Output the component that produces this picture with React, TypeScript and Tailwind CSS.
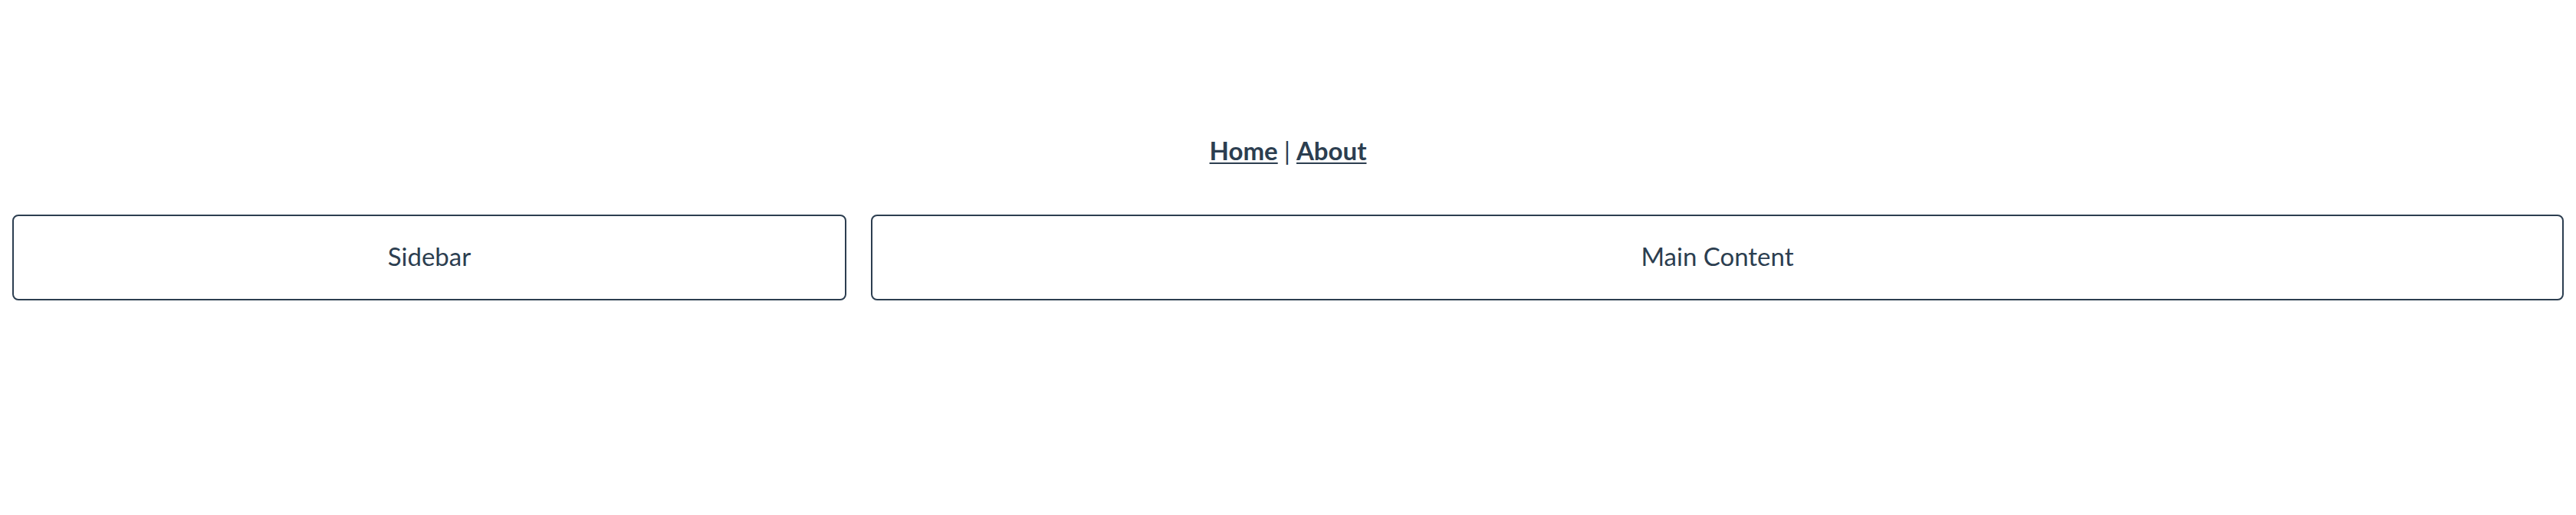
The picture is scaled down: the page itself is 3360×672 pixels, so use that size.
import React from "react";

const App: React.FC = () => {
  return (
    <div className="min-h-[672px] bg-white text-[#2c3e50] font-['Lato','Liberation_Sans',sans-serif] text-center">
      <nav className="pt-[172px] text-[33px] leading-[48px]">
        <a href="#" className="font-bold underline decoration-2 underline-offset-[3px]">
          Home
        </a>
        <span className="mx-[8px]">|</span>
        <a href="#" className="font-bold underline decoration-2 underline-offset-[3px]">
          About
        </a>
      </nav>

      <div className="flex gap-8 px-4 mt-[60px]">
        <div className="w-[1088px] shrink-0 h-[112px] border-2 border-[#2c3e50] rounded-lg flex items-center justify-center pb-[3px] text-[33px]">
          Sidebar
        </div>
        <div className="flex-1 h-[112px] border-2 border-[#2c3e50] rounded-lg flex items-center justify-center pb-[3px] text-[33px]">
          Main Content
        </div>
      </div>
    </div>
  );
};

export default App;
